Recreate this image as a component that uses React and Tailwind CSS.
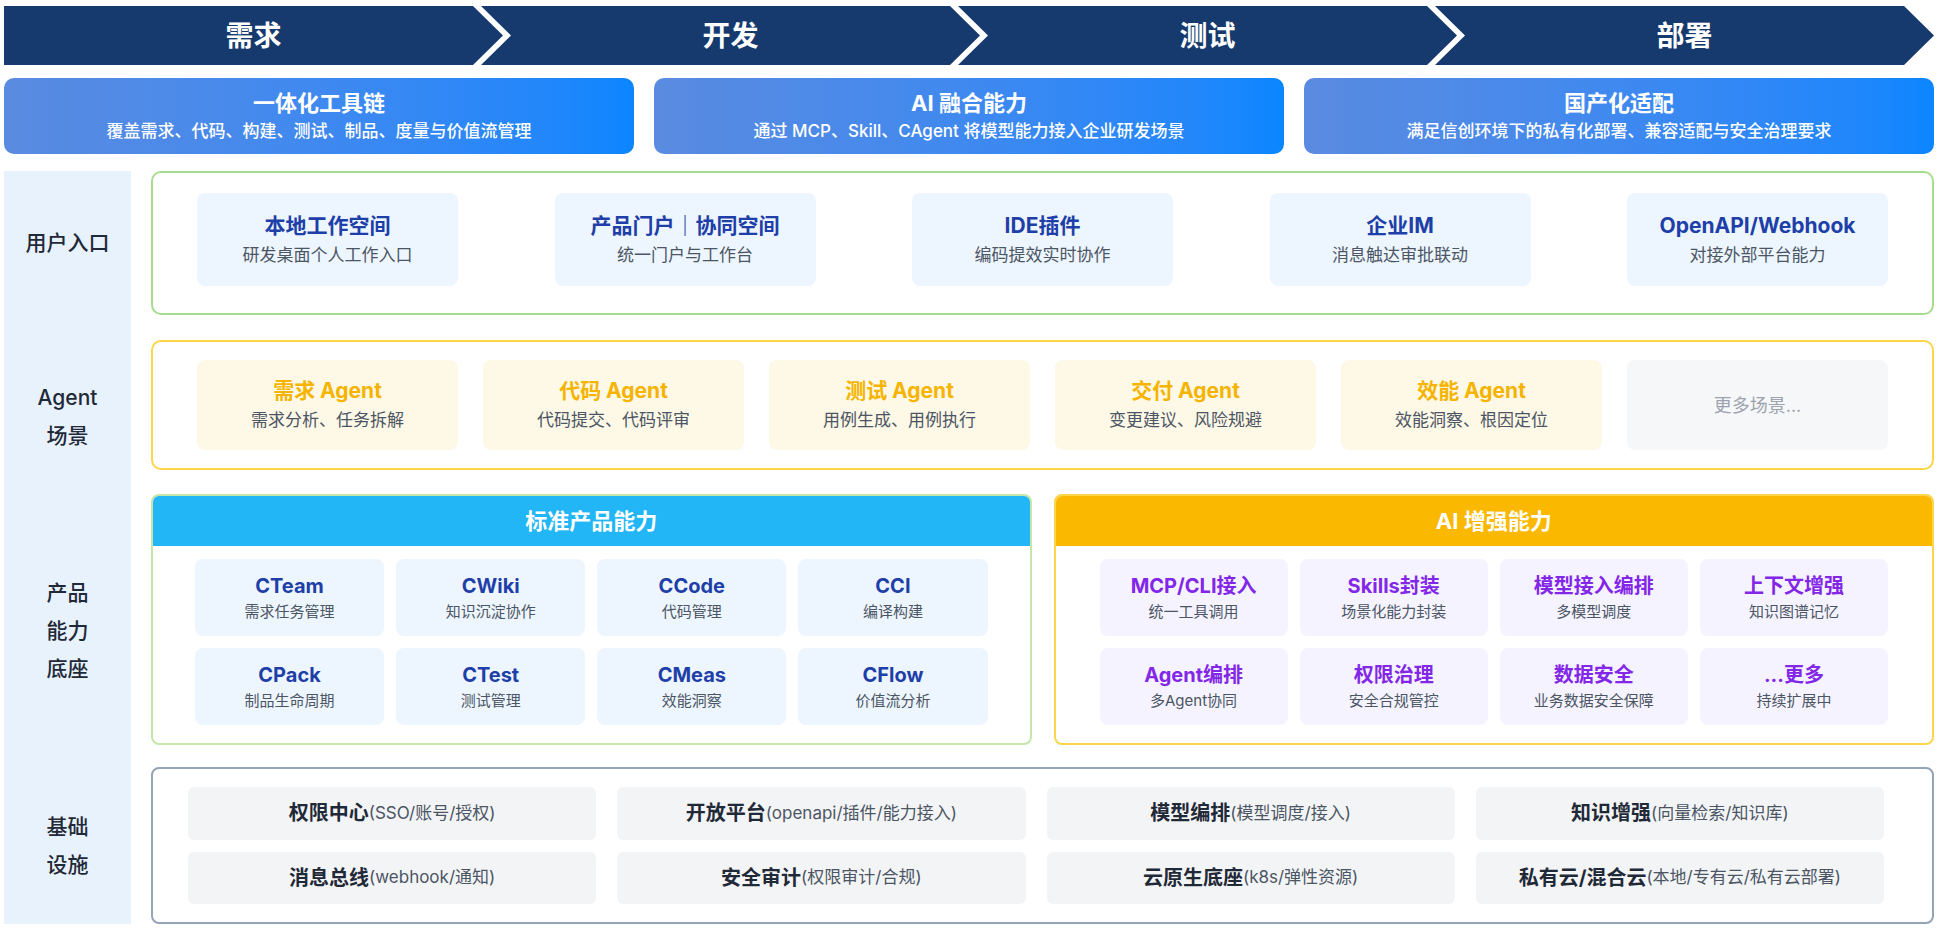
import React from 'react';

const font = { fontFamily: 'Inter, "Noto Sans CJK SC", sans-serif' };

const stages = ['需求', '开发', '测试', '部署'];
const features = [
  ['一体化工具链', '覆盖需求、代码、构建、测试、制品、度量与价值流管理'],
  ['AI 融合能力', '通过 MCP、Skill、CAgent 将模型能力接入企业研发场景'],
  ['国产化适配', '满足信创环境下的私有化部署、兼容适配与安全治理要求'],
];
const entries = [
  ['本地工作空间', '研发桌面个人工作入口'],
  ['产品门户｜协同空间', '统一门户与工作台'],
  ['IDE插件', '编码提效实时协作'],
  ['企业IM', '消息触达审批联动'],
  ['OpenAPI/Webhook', '对接外部平台能力'],
];
const agents = [
  ['需求 Agent', '需求分析、任务拆解'],
  ['代码 Agent', '代码提交、代码评审'],
  ['测试 Agent', '用例生成、用例执行'],
  ['交付 Agent', '变更建议、风险规避'],
  ['效能 Agent', '效能洞察、根因定位'],
];
const std = [
  ['CTeam', '需求任务管理'], ['CWiki', '知识沉淀协作'], ['CCode', '代码管理'], ['CCI', '编译构建'],
  ['CPack', '制品生命周期'], ['CTest', '测试管理'], ['CMeas', '效能洞察'], ['CFlow', '价值流分析'],
];
const ai = [
  ['MCP/CLI接入', '统一工具调用'], ['Skills封装', '场景化能力封装'], ['模型接入编排', '多模型调度'], ['上下文增强', '知识图谱记忆'],
  ['Agent编排', '多Agent协同'], ['权限治理', '安全合规管控'], ['数据安全', '业务数据安全保障'], ['...更多', '持续扩展中'],
];
const infra = [
  ['权限中心', '(SSO/账号/授权)'], ['开放平台', '(openapi/插件/能力接入)'], ['模型编排', '(模型调度/接入)'], ['知识增强', '(向量检索/知识库)'],
  ['消息总线', '(webhook/通知)'], ['安全审计', '(权限审计/合规)'], ['云原生底座', '(k8s/弹性资源)'], ['私有云/混合云', '(本地/专有云/私有云部署)'],
];

function Label({ children, h }) {
  return <div className={`flex items-center justify-center text-center text-[21px] font-medium leading-[38px] text-[#1f2937] ${h}`}>{children}</div>;
}

export default function App() {
  return (
    <div style={font} className="w-[1938px] h-[934px] bg-white px-[4px] pt-[6px] overflow-hidden">
      {/* Stage chevrons */}
      <div className="flex h-[59px]">
        {stages.map((s, i) => (
          <div
            key={s}
            className={`flex-1 flex items-center justify-center bg-[#173a6e] text-white text-[28px] font-bold ${i === 0 ? '[clip-path:polygon(0_0,calc(100%-30px)_0,100%_50%,calc(100%-30px)_100%,0_100%)]' : '-ml-[22px] [clip-path:polygon(0_0,calc(100%-30px)_0,100%_50%,calc(100%-30px)_100%,0_100%,30px_50%)]'}`}
          >
            {s}
          </div>
        ))}
      </div>

      {/* Feature cards */}
      <div className="grid grid-cols-3 gap-[20px] mt-[13px] h-[76px]">
        {features.map(([t, d]) => (
          <div key={t} className="rounded-[10px] bg-gradient-to-r from-[#5a8be0] to-[#0a86ff] flex flex-col items-center justify-center text-white">
            <div className="text-[22px] font-bold leading-[30px]">{t}</div>
            <div className="text-[17px] font-medium leading-[26px]">{d}</div>
          </div>
        ))}
      </div>

      <div className="flex mt-[17px] gap-[20px]">
        {/* Labels */}
        <div className="w-[127px] bg-[#e8f2fd] flex flex-col">
          <Label h="h-[144px]">用户入口</Label>
          <Label h="h-[179px] pt-[25px]">Agent<br />场景</Label>
          <Label h="h-[274px]">产品<br />能力<br />底座</Label>
          <Label h="flex-1 h-[157px]">基础<br />设施</Label>
        </div>

        <div className="flex-1 flex flex-col">
          {/* 用户入口 */}
          <div className="h-[144px] border-2 border-[#a7dc8f] rounded-[10px] flex justify-between px-[44px] pt-[20px]">
            {entries.map(([t, d]) => (
              <div key={t} className="w-[261px] h-[93px] bg-[#edf5ff] rounded-[8px] flex flex-col items-center justify-center">
                <div className="text-[21px] font-bold text-[#1e3fa8] leading-[30px]">{t}</div>
                <div className="text-[17px] text-[#4b5563] leading-[28px]">{d}</div>
              </div>
            ))}
          </div>

          {/* Agent */}
          <div className="mt-[25px] h-[130px] border-2 border-[#fcd64a] rounded-[10px] flex gap-[25px] px-[44px] items-center">
            {agents.map(([t, d]) => (
              <div key={t} className="flex-1 h-[90px] bg-[#fef8e7] rounded-[8px] flex flex-col items-center justify-center">
                <div className="text-[21px] font-bold text-[#f5b400] leading-[30px]">{t}</div>
                <div className="text-[17px] text-[#4b5563] leading-[28px]">{d}</div>
              </div>
            ))}
            <div className="flex-1 h-[90px] bg-[#f6f7f9] rounded-[8px] flex items-center justify-center text-[18px] text-[#9ca3af]">更多场景...</div>
          </div>

          {/* 产品能力 */}
          <div className="mt-[24px] h-[251px] grid grid-cols-2 gap-[22px]">
            <div className="border-2 border-[#c4e6a8] rounded-[8px] overflow-hidden flex flex-col">
              <div className="h-[50px] bg-[#22b6f6] text-white text-[22px] font-bold flex items-center justify-center">标准产品能力</div>
              <div className="grid grid-cols-4 gap-x-[12px] gap-y-[12px] px-[42px] pt-[13px]">
                {std.map(([t, d]) => (
                  <div key={t} className="h-[77px] bg-[#edf5ff] rounded-[8px] flex flex-col items-center justify-center">
                    <div className="text-[20px] font-bold text-[#1e3fa8] leading-[28px]">{t}</div>
                    <div className="text-[15px] text-[#4b5563] leading-[24px]">{d}</div>
                  </div>
                ))}
              </div>
            </div>
            <div className="border-2 border-[#fcd64a] rounded-[8px] overflow-hidden flex flex-col">
              <div className="h-[50px] bg-[#fbb800] text-white text-[22px] font-bold flex items-center justify-center">AI 增强能力</div>
              <div className="grid grid-cols-4 gap-x-[12px] gap-y-[12px] px-[44px] pt-[13px]">
                {ai.map(([t, d]) => (
                  <div key={t} className="h-[77px] bg-[#f5f3ff] rounded-[8px] flex flex-col items-center justify-center">
                    <div className="text-[20px] font-bold text-[#8226e8] leading-[28px]">{t}</div>
                    <div className="text-[15px] text-[#4b5563] leading-[24px]">{d}</div>
                  </div>
                ))}
              </div>
            </div>
          </div>

          {/* 基础设施 */}
          <div className="mt-[22px] h-[157px] border-2 border-[#94a3b8] rounded-[8px] grid grid-cols-4 gap-x-[21px] gap-y-[12px] pl-[35px] pr-[48px] py-[18px]">
            {infra.map(([t, d]) => (
              <div key={t} className="bg-[#f3f4f6] rounded-[6px] flex items-center justify-center">
                <span className="text-[20px] font-bold text-[#1f2937]">{t}</span>
                <span className="text-[17px] text-[#4b5563]">{d}</span>
              </div>
            ))}
          </div>
        </div>
      </div>
    </div>
  );
}
